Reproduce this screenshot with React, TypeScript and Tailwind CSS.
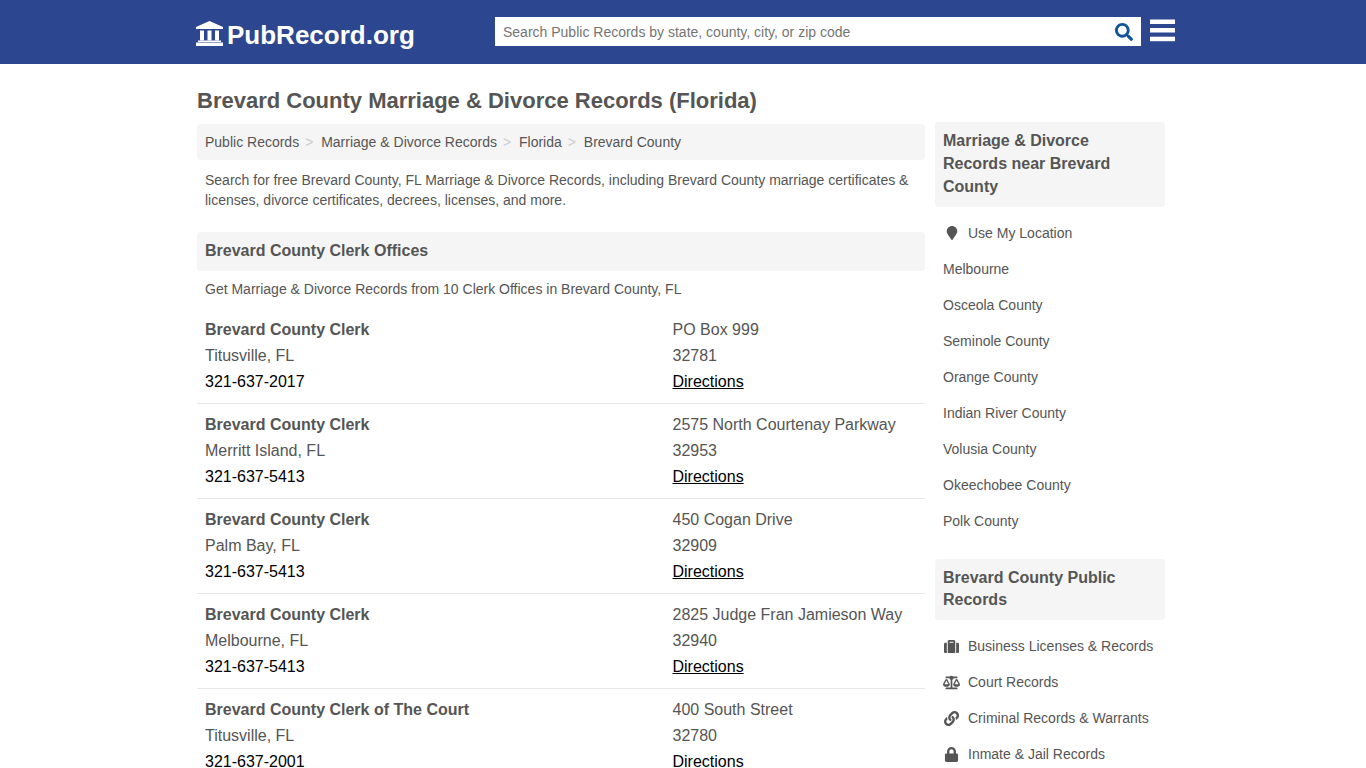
import { FaSearch, FaMapMarker, FaSuitcase, FaBalanceScale, FaLink, FaLock } from "react-icons/fa";

const offices = [
  { name: "Brevard County Clerk", city: "Titusville, FL", phone: "321-637-2017", addr: "PO Box 999", zip: "32781" },
  { name: "Brevard County Clerk", city: "Merritt Island, FL", phone: "321-637-5413", addr: "2575 North Courtenay Parkway", zip: "32953" },
  { name: "Brevard County Clerk", city: "Palm Bay, FL", phone: "321-637-5413", addr: "450 Cogan Drive", zip: "32909" },
  { name: "Brevard County Clerk", city: "Melbourne, FL", phone: "321-637-5413", addr: "2825 Judge Fran Jamieson Way", zip: "32940" },
  { name: "Brevard County Clerk of The Court", city: "Titusville, FL", phone: "321-637-2001", addr: "400 South Street", zip: "32780" },
];

const nearby = ["Melbourne", "Osceola County", "Seminole County", "Orange County", "Indian River County", "Volusia County", "Okeechobee County", "Polk County"];

const records = [
  { label: "Business Licenses & Records", icon: FaSuitcase },
  { label: "Court Records", icon: FaBalanceScale },
  { label: "Criminal Records & Warrants", icon: FaLink },
  { label: "Inmate & Jail Records", icon: FaLock },
];

const crumbs = ["Public Records", "Marriage & Divorce Records", "Florida", "Brevard County"];

function LogoIcon() {
  return (
    <svg viewBox="0 0 27 25" className="w-[27px] h-[25px] ml-[1px] -mt-[3px]" fill="currentColor">
      <polygon points="13.5,0 27,6 27,8 0,8 0,6" />
      <rect x="4" y="9.5" width="4" height="10" />
      <rect x="11.5" y="9.5" width="4" height="10" />
      <rect x="19" y="9.5" width="4" height="10" />
      <rect x="2" y="19.5" width="23" height="1.5" />
      <rect x="0" y="21.5" width="27" height="3.5" />
    </svg>
  );
}

function MenuIcon() {
  return (
    <svg viewBox="0 0 25 23" className="w-[25px] h-[23px] ml-[9px] mt-[2px] text-white" fill="currentColor">
      <rect y="0.5" width="25" height="4.5" />
      <rect y="9" width="25" height="4.5" />
      <rect y="17.7" width="25" height="4.5" />
    </svg>
  );
}

function Header() {
  return (
    <header className="h-16 bg-[#2d4690]">
      <div className="w-[980px] ml-[195px] pt-[17px] flex items-start">
        <a href="#" className="w-[300px] shrink-0 flex items-center gap-[4px] text-white font-bold text-[26px] leading-[36px]">
          <LogoIcon />
          <span>PubRecord.org</span>
        </a>
        <div className="w-[646px] h-[29px] shrink-0 bg-white flex items-center justify-between pl-2 pr-[8px]">
          <span className="text-sm text-[#757575]">Search Public Records by state, county, city, or zip code</span>
          <FaSearch className="w-[18px] h-[18px] text-[#0f5499]" />
        </div>
        <MenuIcon />
      </div>
    </header>
  );
}

function Office({ o, last }: { o: (typeof offices)[number]; last: boolean }) {
  return (
    <div className={"flex px-2 py-2 text-base leading-[26px] text-[#555] " + (last ? "" : "border-b border-[#e7e7e7]")}>
      <div className="w-[467.5px]">
        <div className="font-bold">{o.name}</div>
        <div>{o.city}</div>
        <div className="text-black">{o.phone}</div>
      </div>
      <div>
        <div>{o.addr}</div>
        <div>{o.zip}</div>
        <a href="#" className="text-black underline">Directions</a>
      </div>
    </div>
  );
}

export default function App() {
  return (
    <div className="h-[768px] overflow-hidden bg-white font-['Liberation_Sans',Arial,sans-serif] text-[#555]">
      <Header />
      <div className="w-[968px] ml-[197px] flex gap-[10px]">
        <main className="w-[728px]">
          <h1 className="mt-[22px] text-[22px] leading-[30px] font-bold">Brevard County Marriage &amp; Divorce Records (Florida)</h1>
          <nav className="mt-[8px] h-9 rounded bg-[#f5f5f5] px-2 flex items-center text-sm">
            {crumbs.map((c, i) => (
              <span key={c} className="flex items-center">
                {i > 0 && <span className="w-[22px] pl-[6px] text-[#ccc]">&gt;</span>}
                {c}
              </span>
            ))}
          </nav>
          <p className="mt-[10px] px-2 text-sm leading-5">
            Search for free Brevard County, FL Marriage &amp; Divorce Records, including Brevard County marriage certificates &amp; licenses, divorce certificates, decrees, licenses, and more.
          </p>
          <h2 className="mt-[22px] h-[39px] rounded bg-[#f5f5f5] px-2 text-base font-bold leading-[37px]">Brevard County Clerk Offices</h2>
          <p className="mt-2 px-2 text-sm leading-5">Get Marriage &amp; Divorce Records from 10 Clerk Offices in Brevard County, FL</p>
          <div className="mt-[10px]">
            {offices.map((o, i) => (
              <Office key={i} o={o} last={i === offices.length - 1} />
            ))}
          </div>
        </main>
        <aside className="w-[230px] pt-[58px] text-sm">
          <h3 className="rounded bg-[#f5f5f5] px-2 pt-[7px] pb-[9px] text-base font-bold leading-[23px]">Marriage &amp; Divorce Records near Brevard County</h3>
          <ul className="mt-2">
            <li className="h-9 px-2 flex items-center">
              <FaMapMarker className="w-[12px] h-[14px] ml-[3px] mr-[10px] text-[#555]" />
              Use My Location
            </li>
            {nearby.map((n) => (
              <li key={n} className="h-9 px-2 flex items-center">{n}</li>
            ))}
          </ul>
          <h3 className="mt-[20px] rounded bg-[#f5f5f5] px-2 pt-[8px] pb-[9px] text-base font-bold leading-[22px]">Brevard County Public Records</h3>
          <ul className="mt-2">
            {records.map((r) => {
              const Icon = r.icon;
              return (
                <li key={r.label} className="h-9 px-2 flex items-center">
                  <span className="w-[17px] mr-2 flex justify-center">
                    <Icon className="w-[17px] h-[15px] text-[#555]" />
                  </span>
                  {r.label}
                </li>
              );
            })}
          </ul>
        </aside>
      </div>
    </div>
  );
}
